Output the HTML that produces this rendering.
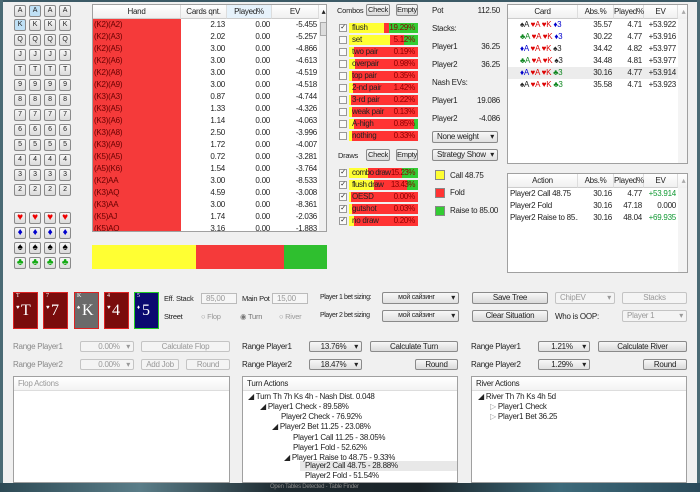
<!DOCTYPE html>
<html><head><meta charset="utf-8"><style>
*{box-sizing:border-box;margin:0;padding:0}
body{width:700px;height:492px;overflow:hidden;background:#f0f0f0;font-family:"Liberation Sans",sans-serif;font-size:8px;letter-spacing:-0.25px;color:#222;position:relative}
.a{position:absolute;white-space:nowrap}
.b{position:absolute;background:linear-gradient(#f7f7f7,#dadada);border:1px solid #8a8a8a;border-radius:2px;text-align:center;font-size:8px;color:#222;white-space:nowrap;overflow:hidden}
.rb{width:12px;height:12px;line-height:10px;font-size:7px}
.sel{position:absolute;background:linear-gradient(#f7f7f7,#e0e0e0);border:1px solid #8a8a8a;border-radius:2px;font-size:8px;padding-left:4px;white-space:nowrap;overflow:hidden}
.sel:after{content:"▾";position:absolute;right:3px;top:0;font-size:8px}
.dis{color:#999;border-color:#c4c4c4;background:#f4f4f4}
.tbl{position:absolute;background:#fff;border:1px solid #a0a0a0;overflow:hidden}
.hd{position:absolute;top:0;height:14px;line-height:14px;text-align:center;border-right:1px solid #ddd;background:linear-gradient(#fff,#f0f0f0);border-bottom:1px solid #ccc;font-size:8px}
.cb{position:absolute;width:8px;height:8px;border:1px solid #999;background:#fafafa;font-size:7px;line-height:6px;text-align:center}
.bar{position:absolute;height:10px;width:69px;font-size:8px;line-height:10px}
.bar span{position:absolute;top:0;height:10px}
.pl{position:absolute;left:3px;color:#222}
.pr{position:absolute;right:3px;color:#8b0000}
.card{position:absolute;top:292px;width:25px;height:37px;border:1px solid #d22;color:#fff;font-family:"Liberation Serif",serif;letter-spacing:0}
.card .s{position:absolute;left:2px;top:0;font-size:6px}
.card .p{position:absolute;left:2px;top:12px;font-size:6px}
.card .g{position:absolute;left:7px;top:9px;font-size:16px}
.pan{position:absolute;top:376px;height:107px;background:#fff;border:1px solid #a0a0a0;overflow:hidden}
.pan .h{height:14px;line-height:14px;padding-left:4px;border-bottom:1px solid #ddd;background:linear-gradient(#fff,#f3f3f3)}
.t{position:absolute;font-size:8px;white-space:nowrap}
.g4{position:absolute;display:grid;line-height:12px;font-size:8px}
.g4 span{white-space:nowrap;overflow:hidden}
.rt{text-align:right;padding-right:2px}
</style></head><body>
<div class="a" style="left:0;top:0;width:700px;height:2px;background:#3c5a66"></div>
<div class="a" style="left:0;top:0;width:3px;height:492px;background:#4a6a74"></div>
<div class="a" style="left:697px;top:0;width:3px;height:492px;background:#4a6a74"></div>

<div class="b rb" style="left:14px;top:5px">A</div><div class="b rb" style="left:29px;top:5px;background:#bfe0f5">A</div><div class="b rb" style="left:44px;top:5px">A</div><div class="b rb" style="left:59px;top:5px">A</div>
<div class="b rb" style="left:14px;top:19px;background:#bfe0f5">K</div><div class="b rb" style="left:29px;top:19px">K</div><div class="b rb" style="left:44px;top:19px">K</div><div class="b rb" style="left:59px;top:19px">K</div>
<div class="b rb" style="left:14px;top:34px">Q</div><div class="b rb" style="left:29px;top:34px">Q</div><div class="b rb" style="left:44px;top:34px">Q</div><div class="b rb" style="left:59px;top:34px">Q</div>
<div class="b rb" style="left:14px;top:49px">J</div><div class="b rb" style="left:29px;top:49px">J</div><div class="b rb" style="left:44px;top:49px">J</div><div class="b rb" style="left:59px;top:49px">J</div>
<div class="b rb" style="left:14px;top:64px">T</div><div class="b rb" style="left:29px;top:64px">T</div><div class="b rb" style="left:44px;top:64px">T</div><div class="b rb" style="left:59px;top:64px">T</div>
<div class="b rb" style="left:14px;top:79px">9</div><div class="b rb" style="left:29px;top:79px">9</div><div class="b rb" style="left:44px;top:79px">9</div><div class="b rb" style="left:59px;top:79px">9</div>
<div class="b rb" style="left:14px;top:94px">8</div><div class="b rb" style="left:29px;top:94px">8</div><div class="b rb" style="left:44px;top:94px">8</div><div class="b rb" style="left:59px;top:94px">8</div>
<div class="b rb" style="left:14px;top:109px">7</div><div class="b rb" style="left:29px;top:109px">7</div><div class="b rb" style="left:44px;top:109px">7</div><div class="b rb" style="left:59px;top:109px">7</div>
<div class="b rb" style="left:14px;top:124px">6</div><div class="b rb" style="left:29px;top:124px">6</div><div class="b rb" style="left:44px;top:124px">6</div><div class="b rb" style="left:59px;top:124px">6</div>
<div class="b rb" style="left:14px;top:139px">5</div><div class="b rb" style="left:29px;top:139px">5</div><div class="b rb" style="left:44px;top:139px">5</div><div class="b rb" style="left:59px;top:139px">5</div>
<div class="b rb" style="left:14px;top:154px">4</div><div class="b rb" style="left:29px;top:154px">4</div><div class="b rb" style="left:44px;top:154px">4</div><div class="b rb" style="left:59px;top:154px">4</div>
<div class="b rb" style="left:14px;top:169px">3</div><div class="b rb" style="left:29px;top:169px">3</div><div class="b rb" style="left:44px;top:169px">3</div><div class="b rb" style="left:59px;top:169px">3</div>
<div class="b rb" style="left:14px;top:184px">2</div><div class="b rb" style="left:29px;top:184px">2</div><div class="b rb" style="left:44px;top:184px">2</div><div class="b rb" style="left:59px;top:184px">2</div>
<div class="b rb" style="left:14px;top:212px;color:#e00;font-size:10px">♥</div><div class="b rb" style="left:29px;top:212px;color:#e00;font-size:10px">♥</div><div class="b rb" style="left:44px;top:212px;color:#e00;font-size:10px">♥</div><div class="b rb" style="left:59px;top:212px;color:#e00;font-size:10px">♥</div>
<div class="b rb" style="left:14px;top:227px;color:#00c;font-size:10px">♦</div><div class="b rb" style="left:29px;top:227px;color:#00c;font-size:10px">♦</div><div class="b rb" style="left:44px;top:227px;color:#00c;font-size:10px">♦</div><div class="b rb" style="left:59px;top:227px;color:#00c;font-size:10px">♦</div>
<div class="b rb" style="left:14px;top:242px;color:#000;font-size:10px">♠</div><div class="b rb" style="left:29px;top:242px;color:#000;font-size:10px">♠</div><div class="b rb" style="left:44px;top:242px;color:#000;font-size:10px">♠</div><div class="b rb" style="left:59px;top:242px;color:#000;font-size:10px">♠</div>
<div class="b rb" style="left:14px;top:257px;color:#1a1;font-size:10px">♣</div><div class="b rb" style="left:29px;top:257px;color:#1a1;font-size:10px">♣</div><div class="b rb" style="left:44px;top:257px;color:#1a1;font-size:10px">♣</div><div class="b rb" style="left:59px;top:257px;color:#1a1;font-size:10px">♣</div>

<div class="tbl" style="left:92px;top:4px;width:235px;height:228px">
<div class="hd" style="left:0;width:88px">Hand</div><div class="hd" style="left:88px;width:46px">Cards qnt.</div><div class="hd" style="left:134px;width:45px;background:#e6f2fb">Played%</div><div class="hd" style="left:179px;width:47px">EV</div><div class="hd" style="left:226px;width:9px;border:0">▴</div>
<div class="a" style="left:226px;top:14px;width:9px;height:214px;background:#f0f0f0"></div>
<div class="a" style="left:227px;top:17px;width:7px;height:14px;background:#ddd;border:1px solid #aaa"></div>
<div class="a" style="left:0;top:14px;width:88px;height:216px;background:#f53a3a"></div>
<div class="g4" style="left:0;top:14px;width:226px;grid-template-columns:88px 46px 45px 47px">
<span style="padding-left:1px;color:#600">(K2)(A2)</span><span class="rt">2.13</span><span class="rt">0.00</span><span class="rt">-5.455</span>
<span style="padding-left:1px;color:#600">(K2)(A3)</span><span class="rt">2.02</span><span class="rt">0.00</span><span class="rt">-5.257</span>
<span style="padding-left:1px;color:#600">(K2)(A5)</span><span class="rt">3.00</span><span class="rt">0.00</span><span class="rt">-4.866</span>
<span style="padding-left:1px;color:#600">(K2)(A6)</span><span class="rt">3.00</span><span class="rt">0.00</span><span class="rt">-4.613</span>
<span style="padding-left:1px;color:#600">(K2)(A8)</span><span class="rt">3.00</span><span class="rt">0.00</span><span class="rt">-4.519</span>
<span style="padding-left:1px;color:#600">(K2)(A9)</span><span class="rt">3.00</span><span class="rt">0.00</span><span class="rt">-4.518</span>
<span style="padding-left:1px;color:#600">(K3)(A3)</span><span class="rt">0.87</span><span class="rt">0.00</span><span class="rt">-4.744</span>
<span style="padding-left:1px;color:#600">(K3)(A5)</span><span class="rt">1.33</span><span class="rt">0.00</span><span class="rt">-4.326</span>
<span style="padding-left:1px;color:#600">(K3)(A6)</span><span class="rt">1.14</span><span class="rt">0.00</span><span class="rt">-4.063</span>
<span style="padding-left:1px;color:#600">(K3)(A8)</span><span class="rt">2.50</span><span class="rt">0.00</span><span class="rt">-3.996</span>
<span style="padding-left:1px;color:#600">(K3)(A9)</span><span class="rt">1.72</span><span class="rt">0.00</span><span class="rt">-4.007</span>
<span style="padding-left:1px;color:#600">(K5)(A5)</span><span class="rt">0.72</span><span class="rt">0.00</span><span class="rt">-3.281</span>
<span style="padding-left:1px;color:#600">(A5)(K6)</span><span class="rt">1.54</span><span class="rt">0.00</span><span class="rt">-3.764</span>
<span style="padding-left:1px;color:#600">(K2)AA</span><span class="rt">3.00</span><span class="rt">0.00</span><span class="rt">-8.533</span>
<span style="padding-left:1px;color:#600">(K3)AQ</span><span class="rt">4.59</span><span class="rt">0.00</span><span class="rt">-3.008</span>
<span style="padding-left:1px;color:#600">(K3)AA</span><span class="rt">3.00</span><span class="rt">0.00</span><span class="rt">-8.361</span>
<span style="padding-left:1px;color:#600">(K5)AJ</span><span class="rt">1.74</span><span class="rt">0.00</span><span class="rt">-2.036</span>
<span style="padding-left:1px;color:#600">(K5)AQ</span><span class="rt">3.16</span><span class="rt">0.00</span><span class="rt">-1.883</span>
</div>
</div>
<div class="a" style="left:92px;top:245px;width:104px;height:24px;background:#ffff33"></div>
<div class="a" style="left:196px;top:245px;width:88px;height:24px;background:#f53a3a"></div>
<div class="a" style="left:284px;top:245px;width:43px;height:24px;background:#2fbf2f"></div>

<div class="t" style="left:337px;top:6px;font-size:7.5px">Combos</div>
<div class="b" style="left:366px;top:4px;width:24px;height:12px;line-height:10px;font-size:7.5px">Check</div>
<div class="b" style="left:396px;top:4px;width:22px;height:12px;line-height:10px;font-size:7.5px">Empty</div>

<div class="cb" style="left:339px;top:24px">✓</div><div class="bar" style="left:349px;top:23px"><span style="left:0;width:35px;background:#ff3"></span><span style="left:35px;width:5px;background:#f33"></span><span style="left:40px;width:29px;background:#3c3"></span><span class="pl">flush</span><span class="pr">19.29%</span></div>
<div class="cb" style="left:339px;top:36px"></div><div class="bar" style="left:349px;top:35px"><span style="left:0;width:41px;background:#ff3"></span><span style="left:41px;width:14px;background:#f33"></span><span style="left:55px;width:14px;background:#3c3"></span><span class="pl">set</span><span class="pr">5.12%</span></div>
<div class="cb" style="left:339px;top:48px"></div><div class="bar" style="left:349px;top:47px"><span style="left:0;width:5px;background:#ff3"></span><span style="left:5px;width:64px;background:#f33"></span><span class="pl">two pair</span><span class="pr">0.19%</span></div>
<div class="cb" style="left:339px;top:60px"></div><div class="bar" style="left:349px;top:59px"><span style="left:0;width:6px;background:#ff3"></span><span style="left:6px;width:63px;background:#f33"></span><span class="pl">overpair</span><span class="pr">0.98%</span></div>
<div class="cb" style="left:339px;top:72px"></div><div class="bar" style="left:349px;top:71px"><span style="left:0;width:3px;background:#ff3"></span><span style="left:3px;width:66px;background:#f33"></span><span class="pl">top pair</span><span class="pr">0.35%</span></div>
<div class="cb" style="left:339px;top:84px"></div><div class="bar" style="left:349px;top:83px"><span style="left:0;width:4px;background:#ff3"></span><span style="left:4px;width:65px;background:#f33"></span><span class="pl">2-nd pair</span><span class="pr">1.42%</span></div>
<div class="cb" style="left:339px;top:96px"></div><div class="bar" style="left:349px;top:95px"><span style="left:0;width:2px;background:#ff3"></span><span style="left:2px;width:67px;background:#f33"></span><span class="pl">3-rd pair</span><span class="pr">0.22%</span></div>
<div class="cb" style="left:339px;top:108px"></div><div class="bar" style="left:349px;top:107px"><span style="left:0;width:3px;background:#ff3"></span><span style="left:3px;width:66px;background:#f33"></span><span class="pl">weak pair</span><span class="pr">0.13%</span></div>
<div class="cb" style="left:339px;top:120px"></div><div class="bar" style="left:349px;top:119px"><span style="left:0;width:5px;background:#ff3"></span><span style="left:5px;width:60px;background:#f33"></span><span style="left:65px;width:4px;background:#3c3"></span><span class="pl">A-high</span><span class="pr">0.85%</span></div>
<div class="cb" style="left:339px;top:132px"></div><div class="bar" style="left:349px;top:131px"><span style="left:0;width:3px;background:#ff3"></span><span style="left:3px;width:66px;background:#f33"></span><span class="pl">nothing</span><span class="pr">0.33%</span></div>

<div class="t" style="left:338px;top:151px;font-size:7.5px">Draws</div>
<div class="b" style="left:366px;top:149px;width:24px;height:12px;line-height:10px;font-size:7.5px">Check</div>
<div class="b" style="left:396px;top:149px;width:22px;height:12px;line-height:10px;font-size:7.5px">Empty</div>
<div class="cb" style="left:339px;top:169px">✓</div><div class="bar" style="left:349px;top:168px;letter-spacing:-0.5px"><span style="left:0;width:19px;background:#ff3"></span><span style="left:19px;width:34px;background:#f33"></span><span style="left:53px;width:16px;background:#3c3"></span><span class="pl">combo draw</span><span class="pr">15.23%</span></div>
<div class="cb" style="left:339px;top:181px">✓</div><div class="bar" style="left:349px;top:180px;letter-spacing:-0.5px"><span style="left:0;width:25px;background:#ff3"></span><span style="left:25px;width:33px;background:#f33"></span><span style="left:58px;width:11px;background:#3c3"></span><span class="pl">flush draw</span><span class="pr">13.43%</span></div>
<div class="cb" style="left:339px;top:193px">✓</div><div class="bar" style="left:349px;top:192px"><span style="left:0;width:2px;background:#ff3"></span><span style="left:2px;width:67px;background:#f33"></span><span class="pl">OESD</span><span class="pr">0.00%</span></div>
<div class="cb" style="left:339px;top:205px">✓</div><div class="bar" style="left:349px;top:204px"><span style="left:0;width:3px;background:#ff3"></span><span style="left:3px;width:66px;background:#f33"></span><span class="pl">gutshot</span><span class="pr">0.03%</span></div>
<div class="cb" style="left:339px;top:217px">✓</div><div class="bar" style="left:349px;top:216px"><span style="left:0;width:5px;background:#ff3"></span><span style="left:5px;width:64px;background:#f33"></span><span class="pl">no draw</span><span class="pr">0.20%</span></div>

<div class="t" style="left:432px;top:6px">Pot</div><div class="t" style="left:470px;top:6px;width:30px;text-align:right">112.50</div>
<div class="t" style="left:432px;top:24px">Stacks:</div>
<div class="t" style="left:432px;top:42px">Player1</div><div class="t" style="left:470px;top:42px;width:30px;text-align:right">36.25</div>
<div class="t" style="left:432px;top:60px">Player2</div><div class="t" style="left:470px;top:60px;width:30px;text-align:right">36.25</div>
<div class="t" style="left:432px;top:78px">Nash EVs:</div>
<div class="t" style="left:432px;top:96px">Player1</div><div class="t" style="left:470px;top:96px;width:30px;text-align:right">19.086</div>
<div class="t" style="left:432px;top:114px">Player2</div><div class="t" style="left:470px;top:114px;width:30px;text-align:right">-4.086</div>
<div class="sel" style="left:432px;top:131px;width:66px;height:12px;line-height:10px">None weight</div>
<div class="sel" style="left:432px;top:149px;width:66px;height:12px;line-height:10px">Strategy Show</div>
<div class="a" style="left:435px;top:170px;width:10px;height:10px;background:#ff3;border:1px solid #888"></div><div class="t" style="left:450px;top:171px">Call 48.75</div>
<div class="a" style="left:435px;top:188px;width:10px;height:10px;background:#f33;border:1px solid #888"></div><div class="t" style="left:450px;top:188px">Fold</div>
<div class="a" style="left:435px;top:206px;width:10px;height:10px;background:#3c3;border:1px solid #888"></div><div class="t" style="left:450px;top:206px">Raise to 85.00</div>

<div class="tbl" style="left:507px;top:4px;width:181px;height:160px">
<div class="hd" style="left:0;width:70px">Card</div><div class="hd" style="left:70px;width:36px">Abs.%</div><div class="hd" style="left:106px;width:30px">Played%</div><div class="hd" style="left:136px;width:34px">EV</div><div class="hd" style="left:170px;width:11px;border:0;color:#aaa">▴</div>
<div class="a" style="left:0;top:62px;width:170px;height:12px;background:#ececec"></div>
<div class="g4" style="left:0;top:14px;width:170px;grid-template-columns:70px 36px 30px 34px">
<span style="padding-left:12px">♠A <span style="color:#d00">♥A ♥K</span> <span style="color:#00c">♦3</span></span><span class="rt">35.57</span><span class="rt">4.71</span><span class="rt">+53.922</span>
<span style="padding-left:12px"><span style="color:#182">♣A</span> <span style="color:#d00">♥A ♥K</span> <span style="color:#00c">♦3</span></span><span class="rt">30.22</span><span class="rt">4.77</span><span class="rt">+53.916</span>
<span style="padding-left:12px"><span style="color:#00c">♦A</span> <span style="color:#d00">♥A ♥K</span> ♠3</span><span class="rt">34.42</span><span class="rt">4.82</span><span class="rt">+53.977</span>
<span style="padding-left:12px"><span style="color:#182">♣A</span> <span style="color:#d00">♥A ♥K</span> ♠3</span><span class="rt">34.48</span><span class="rt">4.81</span><span class="rt">+53.977</span>
<span style="padding-left:12px"><span style="color:#00c">♦A</span> <span style="color:#d00">♥A ♥K</span> <span style="color:#182">♣3</span></span><span class="rt">30.16</span><span class="rt">4.77</span><span class="rt">+53.914</span>
<span style="padding-left:12px">♠A <span style="color:#d00">♥A ♥K</span> <span style="color:#182">♣3</span></span><span class="rt">35.58</span><span class="rt">4.71</span><span class="rt">+53.923</span>
</div>
<div class="a" style="left:170px;top:14px;width:11px;height:146px;background:#f4f4f4"></div>
</div>

<div class="tbl" style="left:507px;top:173px;width:181px;height:100px">
<div class="hd" style="left:0;width:70px">Action</div><div class="hd" style="left:70px;width:36px">Abs.%</div><div class="hd" style="left:106px;width:30px">Played%</div><div class="hd" style="left:136px;width:34px">EV</div><div class="hd" style="left:170px;width:11px;border:0;color:#aaa">▴</div>
<div class="g4" style="left:0;top:14px;width:170px;grid-template-columns:70px 36px 30px 34px">
<span style="padding-left:2px">Player2 Call 48.75</span><span class="rt">30.16</span><span class="rt">4.77</span><span class="rt" style="color:#193">+53.914</span>
<span style="padding-left:2px">Player2 Fold</span><span class="rt">30.16</span><span class="rt">47.18</span><span class="rt">0.000</span>
<span style="padding-left:2px">Player2 Raise to 85...</span><span class="rt">30.16</span><span class="rt">48.04</span><span class="rt" style="color:#193">+69.935</span>
</div>
<div class="a" style="left:170px;top:14px;width:11px;height:86px;background:#f4f4f4"></div>
</div>

<div class="card" style="left:13px;background:#7a0c0c"><span class="s">T</span><span class="p">♥</span><span class="g">T</span></div>
<div class="card" style="left:43px;background:#7a0c0c"><span class="s">7</span><span class="p">♥</span><span class="g">7</span></div>
<div class="card" style="left:74px;background:#6a6a6a"><span class="s">K</span><span class="p">♠</span><span class="g">K</span></div>
<div class="card" style="left:104px;background:#7a0c0c"><span class="s">4</span><span class="p">♥</span><span class="g">4</span></div>
<div class="card" style="left:134px;background:#0a0a70;border-color:#2c2"><span class="s">5</span><span class="p">♦</span><span class="g">5</span></div>

<div class="t" style="left:164px;top:294px;font-size:7.5px">Eff. Stack</div>
<div class="a" style="left:201px;top:293px;width:36px;height:11px;border:1px solid #bbb;background:#f6f6f6;color:#999;line-height:9px;padding-left:4px">85,00</div>
<div class="t" style="left:242px;top:294px;font-size:7.5px">Main Pot</div>
<div class="a" style="left:272px;top:293px;width:36px;height:11px;border:1px solid #bbb;background:#f6f6f6;color:#999;line-height:9px;padding-left:4px">15,00</div>
<div class="t" style="left:320px;top:294px;font-size:7px;letter-spacing:-0.4px">Player 1 bet sizing:</div>
<div class="sel" style="left:382px;top:292px;width:77px;height:12px;line-height:10px;text-align:center;padding:0 8px 0 0;font-size:7px">мой сайзинг</div>
<div class="b" style="left:472px;top:292px;width:76px;height:12px;line-height:10px">Save Tree</div>
<div class="sel dis" style="left:555px;top:292px;width:60px;height:12px;line-height:10px">ChipEV</div>
<div class="b dis" style="left:622px;top:292px;width:65px;height:12px;line-height:10px">Stacks</div>

<div class="t" style="left:164px;top:312px;font-size:7.5px">Street</div>
<div class="t" style="left:201px;top:312px;color:#999;font-size:7.5px">○ Flop</div>
<div class="t" style="left:240px;top:312px;color:#777;font-size:7.5px">◉ Turn</div>
<div class="t" style="left:279px;top:312px;color:#999;font-size:7.5px">○ River</div>
<div class="t" style="left:320px;top:312px;font-size:7px;letter-spacing:-0.4px">Player 2 bet sizing</div>
<div class="sel" style="left:382px;top:310px;width:77px;height:12px;line-height:10px;text-align:center;padding:0 8px 0 0;font-size:7px">мой сайзинг</div>
<div class="b" style="left:472px;top:310px;width:76px;height:12px;line-height:10px">Clear Situation</div>
<div class="t" style="left:555px;top:312px">Who is OOP:</div>
<div class="sel dis" style="left:622px;top:310px;width:65px;height:12px;line-height:10px">Player 1</div>

<div class="t" style="left:13px;top:342px;color:#888">Range Player1</div>
<div class="sel dis" style="left:80px;top:341px;width:54px;height:11px;line-height:9px;text-align:center">0.00%</div>
<div class="b dis" style="left:141px;top:341px;width:89px;height:11px;line-height:9px">Calculate Flop</div>
<div class="t" style="left:13px;top:360px;color:#888">Range Player2</div>
<div class="sel dis" style="left:80px;top:359px;width:54px;height:11px;line-height:9px;text-align:center">0.00%</div>
<div class="b dis" style="left:141px;top:359px;width:38px;height:11px;line-height:9px">Add Job</div>
<div class="b dis" style="left:186px;top:359px;width:44px;height:11px;line-height:9px">Round</div>

<div class="t" style="left:242px;top:342px">Range Player1</div>
<div class="sel" style="left:309px;top:341px;width:53px;height:11px;line-height:9px;text-align:center;padding-right:8px">13.76%</div>
<div class="b" style="left:370px;top:341px;width:88px;height:11px;line-height:9px">Calculate Turn</div>
<div class="t" style="left:242px;top:360px">Range Player2</div>
<div class="sel" style="left:309px;top:359px;width:53px;height:11px;line-height:9px;text-align:center;padding-right:8px">18.47%</div>
<div class="b" style="left:415px;top:359px;width:43px;height:11px;line-height:9px">Round</div>

<div class="t" style="left:471px;top:342px">Range Player1</div>
<div class="sel" style="left:538px;top:341px;width:52px;height:11px;line-height:9px;text-align:center;padding-right:8px">1.21%</div>
<div class="b" style="left:598px;top:341px;width:89px;height:11px;line-height:9px">Calculate River</div>
<div class="t" style="left:471px;top:360px">Range Player2</div>
<div class="sel" style="left:538px;top:359px;width:52px;height:11px;line-height:9px;text-align:center;padding-right:8px">1.29%</div>
<div class="b" style="left:643px;top:359px;width:44px;height:11px;line-height:9px">Round</div>

<div class="pan" style="left:13px;width:217px"><div class="h" style="color:#999">Flop Actions</div></div>
<div class="pan" style="left:242px;width:216px"><div class="h">Turn Actions</div>
<div class="a" style="left:57px;top:84px;width:157px;height:10px;background:#e8e8e8"></div>
<div class="t" style="left:5px;top:15px">◢ Turn Th 7h Ks 4h - Nash Dist. 0.048</div>
<div class="t" style="left:17px;top:25px">◢ Player1 Check - 89.58%</div>
<div class="t" style="left:38px;top:35px">Player2 Check - 76.92%</div>
<div class="t" style="left:29px;top:45px">◢ Player2 Bet 11.25 - 23.08%</div>
<div class="t" style="left:50px;top:56px">Player1 Call 11.25 - 38.05%</div>
<div class="t" style="left:50px;top:66px">Player1 Fold - 52.62%</div>
<div class="t" style="left:41px;top:76px">◢ Player1 Raise to 48.75 - 9.33%</div>
<div class="t" style="left:62px;top:84px">Player2 Call 48.75 - 28.88%</div>
<div class="t" style="left:62px;top:94px">Player2 Fold - 51.54%</div>
</div>
<div class="pan" style="left:471px;width:216px"><div class="h">River Actions</div>
<div class="t" style="left:6px;top:15px">◢ River Th 7h Ks 4h 5d</div>
<div class="t" style="left:18px;top:25px"><span style="color:#999">▷</span> Player1 Check</div>
<div class="t" style="left:18px;top:35px"><span style="color:#999">▷</span> Player1 Bet 36.25</div>
</div>

<div class="a" style="left:0;top:483px;width:700px;height:9px;background:linear-gradient(90deg,#2d4a55,#5a7d88 20%,#1e2a30 40%,#1a2328 60%,#3d6a7a 80%,#2a4a5a)"></div>
<div class="t" style="left:270px;top:484px;color:#888;font-size:6px">Open Tables Detected - Table Finder</div>
</body></html>
